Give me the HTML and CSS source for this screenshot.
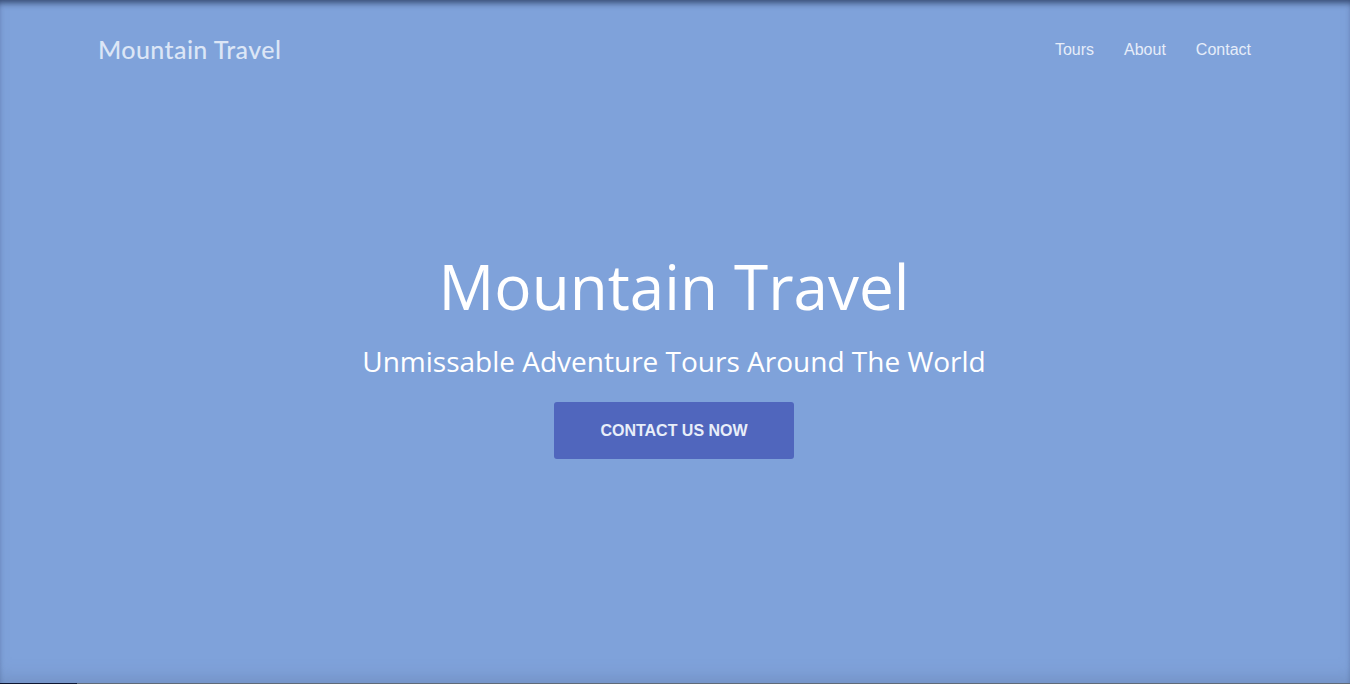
FILE: index.html
```html
<!DOCTYPE html>
<html lang="en">
<head>
<meta charset="utf-8">
<title>Mountain Travel</title>
<link rel="stylesheet" href="styles.css">
</head>
<body>
<div class="page">
  <header class="topbar">
    <a class="logo" href="#">Mountain Travel</a>
    <nav class="nav">
      <a href="#">Tours</a>
      <a href="#">About</a>
      <a href="#">Contact</a>
    </nav>
  </header>
  <main class="hero">
    <h1 class="hero-title">Mountain Travel</h1>
    <p class="hero-sub">Unmissable Adventure Tours Around The World</p>
    <a class="cta" href="#">CONTACT US NOW</a>
  </main>
</div>
<div class="bottom-strip"><span class="strip-dark"></span></div>
</body>
</html>
```

FILE: styles.css
```css
* { box-sizing: border-box; }
html, body { margin: 0; padding: 0; }
body {
  width: 1350px;
  height: 684px;
  overflow: hidden;
  background: #7fa2da;
  font-family: "Liberation Sans", Arial, sans-serif;
}
.page {
  height: 683px;
  background: #7fa2da;
  box-shadow: inset 0 6px 6px -3px rgba(30, 45, 80, 0.75), inset 0 -14px 18px -10px rgba(90, 110, 150, 0.35);
  display: flex;
  flex-direction: column;
}
.topbar {
  display: flex;
  justify-content: space-between;
  align-items: center;
  padding: 34px 99px 0 98px;
  height: 64px;
}
.logo {
  font-family: "Lato", "Noto Sans", sans-serif;
  font-size: 25px;
  font-weight: 500;
  color: #dce6f6;
  text-decoration: none;
  letter-spacing: 0.4px;
}
.nav {
  display: flex;
  gap: 30px;
  padding-top: 2px;
}
.nav a {
  color: #e6edf9;
  text-decoration: none;
  font-size: 16px;
}
.hero {
  display: flex;
  flex-direction: column;
  align-items: center;
  padding-top: 184px;
  padding-right: 2px;
}
.hero-title {
  margin: 0;
  font-family: "Open Sans", sans-serif;
  font-weight: 400;
  font-size: 62px;
  line-height: 76px;
  color: #ffffff;
}
.hero-sub {
  margin: 18px 0 0;
  font-family: "Open Sans", sans-serif;
  font-size: 28px;
  line-height: 38px;
  color: #ffffff;
}
.cta {
  margin-top: 22px;
  width: 240px;
  height: 57px;
  display: flex;
  align-items: center;
  justify-content: center;
  background: #5066bd;
  border-radius: 3px;
  color: #e8eef9;
  font-weight: 700;
  font-size: 16px;
  text-decoration: none;
}
.bottom-strip {
  height: 1px;
  background: #5f6a78;
  display: flex;
}
.strip-dark {
  width: 77px;
  background: #0d1630;
}
```
